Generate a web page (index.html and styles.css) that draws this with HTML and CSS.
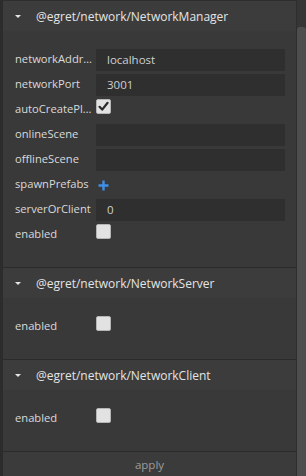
FILE: index.html
```html
<!DOCTYPE html>
<html>
<head>
<meta charset="utf-8">
<link rel="stylesheet" href="styles.css">
</head>
<body>
<div class="frame">
  <div class="edge"></div>
  <div class="panel">
    <div class="scroll">
      <section class="comp">
        <div class="comp-head"><span class="caret"></span><span class="comp-title">@egret/network/NetworkManager</span></div>
        <div class="comp-body">
          <div class="row"><span class="label">networkAddress</span><div class="input">localhost</div></div>
          <div class="row"><span class="label">networkPort</span><div class="input">3001</div></div>
          <div class="row"><span class="label">autoCreatePlayer</span><span class="check checked"><svg viewBox="0 0 15 15" width="15" height="15"><path d="M3.5 7.8 L6.2 10.6 L11.6 3.8" fill="none" stroke="#2a2a2a" stroke-width="2.2" stroke-linecap="round" stroke-linejoin="round"/></svg></span></div>
          <div class="row"><span class="label">onlineScene</span><div class="input"></div></div>
          <div class="row"><span class="label">offlineScene</span><div class="input"></div></div>
          <div class="row"><span class="label">spawnPrefabs</span><span class="plus"><svg viewBox="0 0 11 11" width="11" height="11"><path d="M5.5 0.5 V10.5 M0.5 5.5 H10.5" stroke="#3d8fe8" stroke-width="2.4"/></svg></span></div>
          <div class="row"><span class="label">serverOrClient</span><div class="input">0</div></div>
          <div class="row"><span class="label">enabled</span><span class="check"></span></div>
        </div>
      </section>
      <section class="comp">
        <div class="comp-head"><span class="caret"></span><span class="comp-title">@egret/network/NetworkServer</span></div>
        <div class="comp-body">
          <div class="row"><span class="label">enabled</span><span class="check"></span></div>
        </div>
      </section>
      <section class="comp">
        <div class="comp-head"><span class="caret"></span><span class="comp-title">@egret/network/NetworkClient</span></div>
        <div class="comp-body">
          <div class="row"><span class="label">enabled</span><span class="check"></span></div>
        </div>
      </section>
      <div class="apply">apply</div>
    </div>
    <div class="scrollbar"><div class="thumb"></div></div>
  </div>
</div>
</body>
</html>
```
FILE: styles.css
```css
* { box-sizing: border-box; }
html, body {
  margin: 0;
  padding: 0;
  width: 306px;
  height: 476px;
  overflow: hidden;
  background: #3a3a3a;
  font-family: "Open Sans", "Noto Sans", sans-serif;
}
.frame {
  display: flex;
  height: 476px;
}
.edge {
  width: 3px;
  background: #2c2c2c;
  flex: none;
}
.panel {
  flex: 1;
  display: flex;
  min-width: 0;
}
.scroll {
  flex: 1;
  display: flex;
  flex-direction: column;
  border-top: 1px solid #2e2e2e;
  border-right: 1px solid #2e2e2e;
  background: #3a3a3a;
  min-width: 0;
}
.comp {
  border-bottom: 1px solid #2b2b2b;
}
.comp-head {
  height: 30px;
  display: flex;
  align-items: center;
  background: #3c3c3c;
}
.caret {
  width: 0;
  height: 0;
  margin-left: 12px;
  margin-right: 15px;
  border-left: 3px solid transparent;
  border-right: 3px solid transparent;
  border-top: 3px solid #e6e6e6;
}
.comp-title {
  color: #e4e4e4;
  font-size: 12px;
}
.comp-body {
  padding: 18px 0 21px 12px;
  display: flex;
  flex-direction: column;
  gap: 3px;
  background: #393939;
}
.row {
  height: 22px;
  display: flex;
  align-items: flex-start;
}
.label {
  width: 81px;
  flex: none;
  color: #dadada;
  font-size: 11.2px;
  line-height: 20px;
  white-space: nowrap;
  overflow: hidden;
  text-overflow: ellipsis;
  padding-right: 2px;
}
.input {
  width: 189px;
  height: 22px;
  background: #2f2f2f;
  color: #cfcfcf;
  font-size: 11.5px;
  line-height: 22px;
  padding-left: 11px;
}
.check {
  width: 15px;
  height: 15px;
  background: #e2e2e2;
  border: 1px solid #b5b5b5;
  border-radius: 2px;
  display: flex;
}
.check svg { margin: -1px; }
.plus {
  display: flex;
  margin-left: 2px;
  margin-top: 6px;
}
.apply {
  flex: 1;
  display: flex;
  align-items: center;
  justify-content: center;
  color: #9c9c9c;
  font-size: 11.5px;
  background: #3b3b3b;
}
.scrollbar {
  width: 9px;
  flex: none;
  background: #363636;
  padding-top: 27px;
}
.thumb {
  height: 100%;
  background: #4e4e4e;
  border-radius: 3px 3px 0 0;
}
```
